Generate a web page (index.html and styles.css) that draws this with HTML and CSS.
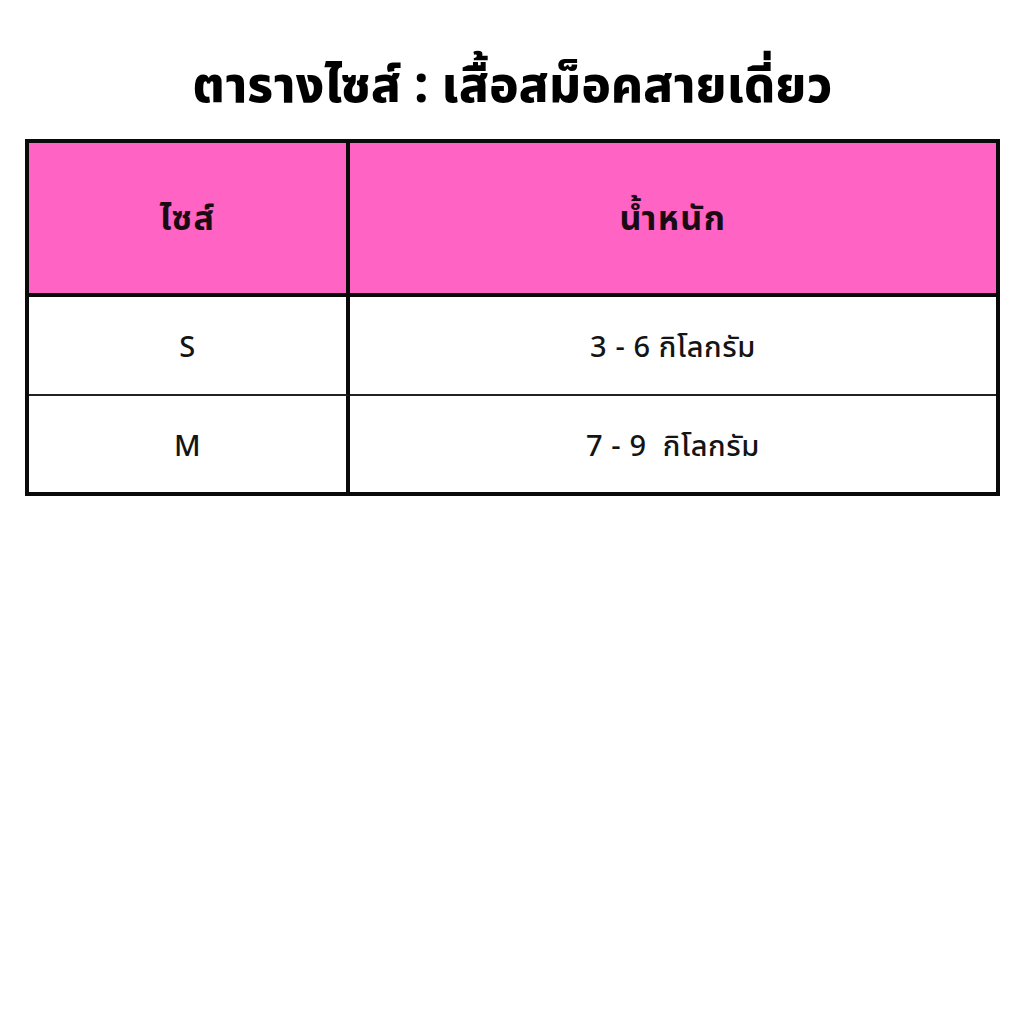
FILE: index.html
```html
<!DOCTYPE html>
<html lang="th">
<head>
<meta charset="utf-8">
<link rel="stylesheet" href="styles.css">
</head>
<body>
<div class="page">
  <h1 class="title">ตารางไซส์ : เสื้อสม็อคสายเดี่ยว</h1>
  <div class="table">
    <div class="cell head first">ไซส์</div>
    <div class="cell head">น้ำหนัก</div>
    <div class="cell first row1">S</div>
    <div class="cell row1">3 - 6 กิโลกรัม</div>
    <div class="cell first">M</div>
    <div class="cell">7 - 9&nbsp; กิโลกรัม</div>
  </div>
</div>
</body>
</html>
```
FILE: styles.css
```css
html, body {
  margin: 0;
  padding: 0;
  background: #ffffff;
}
.page {
  width: 1024px;
  height: 1024px;
  padding: 52px 24px 0 25px;
  box-sizing: border-box;
  font-family: "Noto Sans Thai", "Loma", "Garuda", "Noto Sans", "DejaVu Sans", sans-serif;
  color: #111;
}
.title {
  margin: 0 0 17px 0;
  text-align: center;
  font-size: 49px;
  font-weight: 800;
  line-height: 70px;
  color: #000;
  letter-spacing: 0.3px;
}
.table {
  display: grid;
  grid-template-columns: 321px 1fr;
  grid-template-rows: 154px 99px 96px;
  border: 4px solid #0a0a0a;
  box-sizing: border-box;
  height: 357px;
}
.cell {
  display: flex;
  align-items: center;
  justify-content: center;
  font-size: 29px;
  font-weight: 500;
  color: #141414;
  letter-spacing: 0.6px;
  padding-top: 5px;
}
.first {
  border-right: 4px solid #0a0a0a;
}
.head {
  background: #ff63c3;
  border-bottom: 4px solid #0a0a0a;
  font-size: 34px;
  font-weight: 700;
  color: #1a0a14;
  padding-top: 2px;
  letter-spacing: 1.5px;
}
.row1 {
  border-bottom: 2px solid #222;
}
```
